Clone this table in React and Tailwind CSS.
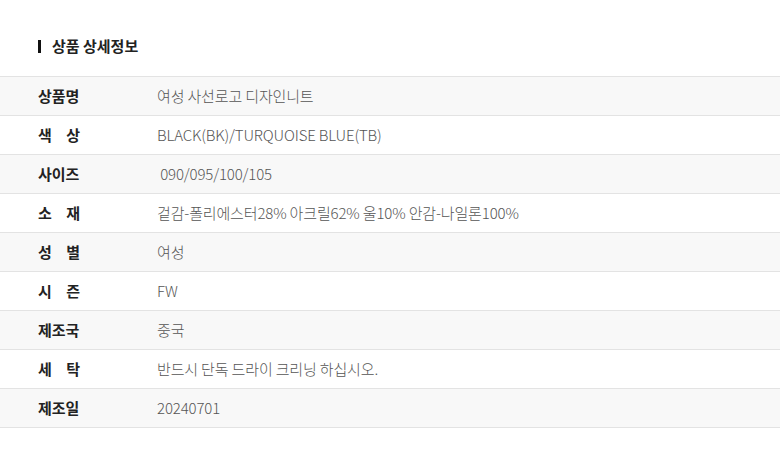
const rows = [
  { label: "상품명", value: "여성 사선로고 디자인니트" },
  { label: "색상", spread: true, value: "BLACK(BK)/TURQUOISE BLUE(TB)" },
  { label: "사이즈", value: " 090/095/100/105" },
  { label: "소재", spread: true, value: "겉감-폴리에스터28% 아크릴62% 울10% 안감-나일론100%" },
  { label: "성별", spread: true, value: "여성" },
  { label: "시즌", spread: true, value: "FW" },
  { label: "제조국", value: "중국" },
  { label: "세탁", spread: true, value: "반드시 단독 드라이 크리닝 하십시오." },
  { label: "제조일", value: "20240701" },
];

function Label({ label, spread }) {
  if (spread) {
    return (
      <div className="flex w-[42px] justify-between">
        {label.split("").map((c, i) => (
          <span key={i}>{c}</span>
        ))}
      </div>
    );
  }
  return <div className="w-[42px]">{label}</div>;
}

export default function App() {
  return (
    <div
      className="w-[780px] h-[466px] bg-white"
      style={{ fontFamily: '"Noto Sans CJK KR", "Noto Sans", sans-serif' }}
    >
      <div className="flex items-center gap-[11px] pl-[38px] pt-[36px] pb-[20px]">
        <span className="block h-[13px] w-[3px] bg-[#111]" />
        <h2 className="text-[15px] font-bold leading-[20px] text-[#222]">상품 상세정보</h2>
      </div>
      <div className="border-t border-[#e3e3e3]">
        {rows.map((r, i) => (
          <div
            key={i}
            className={`flex h-[39px] items-center border-b border-[#e3e3e3] ${
              i % 2 === 0 ? "bg-[#f8f8f8]" : "bg-white"
            }`}
          >
            <div className="w-[157px] pl-[38px] text-[15px] font-bold text-[#222]">
              <Label label={r.label} spread={r.spread} />
            </div>
            <div className="whitespace-pre text-[15px] font-light tracking-[-0.15px] text-[#555]">
              {r.value}
            </div>
          </div>
        ))}
      </div>
    </div>
  );
}
